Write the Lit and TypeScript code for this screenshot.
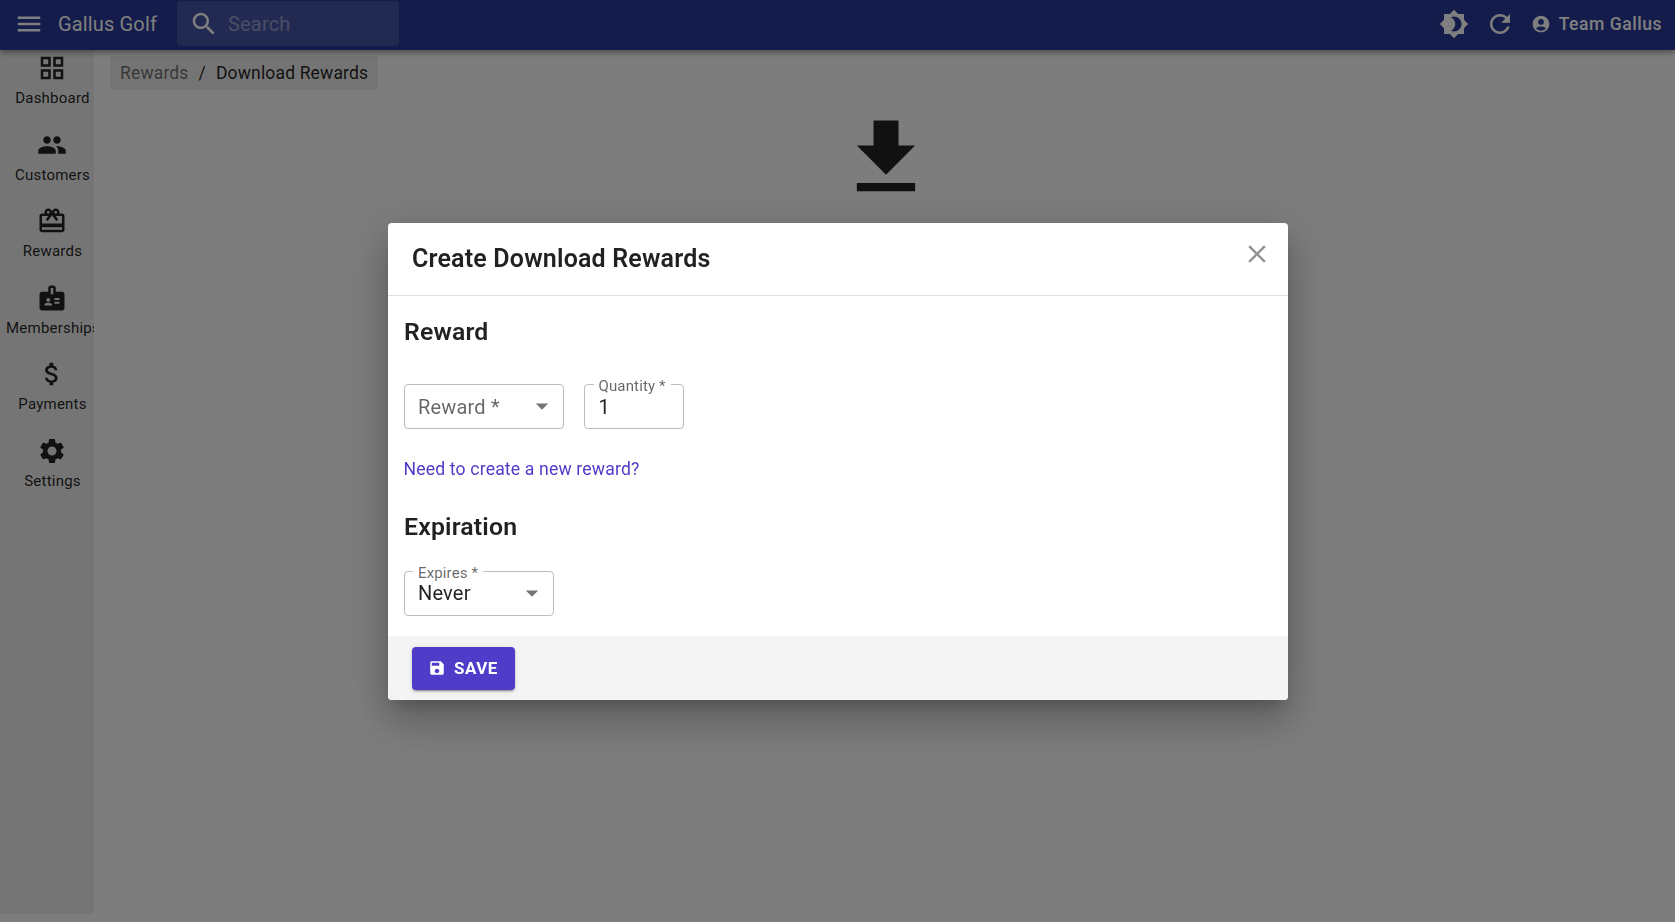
import { LitElement, html, css, svg } from "lit";
import { customElement } from "lit/decorators.js";

const P = {
  menu: "M3 18h18v-2H3v2zm0-5h18v-2H3v2zm0-7v2h18V6H3z",
  search: "M15.5 14h-.79l-.28-.27C15.41 12.59 16 11.11 16 9.5 16 5.91 13.09 3 9.5 3S3 5.91 3 9.5 5.91 16 9.5 16c1.61 0 3.09-.59 4.23-1.57l.27.28v.79l5 4.99L20.49 19l-4.99-5zm-6 0C7.01 14 5 11.99 5 9.5S7.01 5 9.5 5 14 7.01 14 9.5 11.99 14 9.5 14z",
  bright: "M20 8.69V4h-4.69L12 .69 8.69 4H4v4.69L.69 12 4 15.31V20h4.69L12 23.31 15.31 20H20v-4.69L23.31 12 20 8.69zM12 18c-.89 0-1.74-.2-2.5-.55C11.56 16.5 13 14.42 13 12s-1.44-4.5-3.5-5.45C10.26 6.2 11.11 6 12 6c3.31 0 6 2.69 6 6s-2.69 6-6 6z",
  refresh: "M17.65 6.35C16.2 4.9 14.21 4 12 4c-4.42 0-7.99 3.58-7.99 8s3.57 8 7.99 8c3.73 0 6.84-2.55 7.73-6h-2.08c-.82 2.33-3.04 4-5.65 4-3.31 0-6-2.69-6-6s2.69-6 6-6c1.66 0 3.14.69 4.22 1.78L13 11h7V4l-2.35 2.35z",
  account: "M12 2C6.48 2 2 6.48 2 12s4.48 10 10 10 10-4.48 10-10S17.52 2 12 2zm0 4c1.93 0 3.5 1.57 3.5 3.5S13.93 13 12 13s-3.5-1.57-3.5-3.5S10.07 6 12 6zm0 14c-2.03 0-4.43-.82-6.14-2.88C7.55 15.8 9.68 15 12 15s4.45.8 6.14 2.12C16.43 19.18 14.03 20 12 20z",
  grid: "M3 3v8h8V3H3zm6 6H5V5h4v4zm-6 4v8h8v-8H3zm6 6H5v-4h4v4zm4-16v8h8V3h-8zm6 6h-4V5h4v4zm-6 4v8h8v-8h-8zm6 6h-4v-4h4v4z",
  people: "M16 11c1.66 0 2.99-1.34 2.99-3S17.66 5 16 5c-1.66 0-3 1.34-3 3s1.34 3 3 3zm-8 0c1.66 0 2.99-1.34 2.99-3S9.66 5 8 5C6.34 5 5 6.34 5 8s1.34 3 3 3zm0 2c-2.33 0-7 1.17-7 3.5V19h14v-2.5c0-2.33-4.67-3.5-7-3.5zm8 0c-.29 0-.62.02-.97.05 1.16.84 1.97 1.97 1.97 3.45V19h6v-2.5c0-2.33-4.67-3.5-7-3.5z",
  gift: "M20 6h-2.18c.11-.31.18-.65.18-1 0-1.66-1.34-3-3-3-1.05 0-1.96.54-2.5 1.35l-.5.67-.5-.68C10.96 2.54 10.05 2 9 2 7.34 2 6 3.34 6 5c0 .35.07.69.18 1H4c-1.11 0-1.99.89-1.99 2L2 19c0 1.11.89 2 2 2h16c1.11 0 2-.89 2-2V8c0-1.11-.89-2-2-2zm-5-2c.55 0 1 .45 1 1s-.45 1-1 1-1-.45-1-1 .45-1 1-1zM9 4c.55 0 1 .45 1 1s-.45 1-1 1-1-.45-1-1 .45-1 1-1zm11 15H4v-2h16v2zm0-5H4V8h5.08L7 10.83 8.62 12 11 8.76l1-1.36 1 1.36L15.38 12 17 10.83 14.92 8H20v6z",
  badge: "M20 7h-5V4c0-1.1-.9-2-2-2h-2c-1.1 0-2 .9-2 2v3H4c-1.1 0-2 .9-2 2v11c0 1.1.9 2 2 2h16c1.1 0 2-.9 2-2V9c0-1.1-.9-2-2-2zM9 12c.83 0 1.5.67 1.5 1.5S9.83 15 9 15s-1.5-.67-1.5-1.5S8.17 12 9 12zm3 6H6v-.75c0-1 2-1.5 3-1.5s3 .5 3 1.5V18zm1-9h-2V4h2v5zm5 7.5h-4V15h4v1.5zm0-3h-4V12h4v1.5z",
  money: "M11.8 10.9c-2.27-.59-3-1.2-3-2.15 0-1.09 1.01-1.85 2.7-1.85 1.78 0 2.44.85 2.5 2.1h2.21c-.07-1.72-1.12-3.3-3.21-3.81V3h-3v2.16c-1.94.42-3.5 1.68-3.5 3.61 0 2.31 1.91 3.46 4.7 4.13 2.5.6 3 1.48 3 2.41 0 .69-.49 1.79-2.7 1.79-2.06 0-2.87-.92-2.98-2.1h-2.2c.12 2.19 1.76 3.42 3.68 3.83V21h3v-2.15c1.95-.37 3.5-1.5 3.5-3.55 0-2.84-2.43-3.81-4.7-4.4z",
  gear: "M19.14,12.94c0.04-0.3,0.06-0.61,0.06-0.94c0-0.32-0.02-0.64-0.07-0.94l2.03-1.58c0.18-0.14,0.23-0.41,0.12-0.61l-1.92-3.32c-0.12-0.22-0.37-0.29-0.59-0.22l-2.39,0.96c-0.5-0.38-1.03-0.7-1.62-0.94L14.4,2.81c-0.04-0.24-0.24-0.41-0.48-0.41h-3.84c-0.24,0-0.43,0.17-0.47,0.41L9.25,5.35C8.66,5.59,8.12,5.92,7.63,6.29L5.24,5.33c-0.22-0.08-0.47,0-0.59,0.22L2.74,8.87C2.62,9.08,2.66,9.34,2.86,9.48l2.03,1.58C4.84,11.36,4.8,11.69,4.8,12s0.02,0.64,0.07,0.94l-2.03,1.58c-0.18,0.14-0.23,0.41-0.12,0.61l1.92,3.32c0.12,0.22,0.37,0.29,0.59,0.22l2.39-0.96c0.5,0.38,1.03,0.7,1.62,0.94l0.36,2.54c0.05,0.24,0.24,0.41,0.48,0.41h3.84c0.24,0,0.44-0.17,0.47-0.41l0.36-2.54c0.59-0.24,1.13-0.56,1.62-0.94l2.39,0.96c0.22,0.08,0.47,0,0.59-0.22l1.92-3.32c0.12-0.22,0.07-0.47-0.12-0.61L19.14,12.94z M12,15.6c-1.98,0-3.6-1.62-3.6-3.6s1.62-3.6,3.6-3.6s3.6,1.62,3.6,3.6S13.98,15.6,12,15.6z",
  download: "M19 9h-4V3H9v6H5l7 7 7-7zM5 18v2h14v-2H5z",
  close: "M19 6.41 17.59 5 12 10.59 6.41 5 5 6.41 10.59 12 5 17.59 6.41 19 12 13.41 17.59 19 19 17.59 13.41 12z",
  arrow: "M7 10l5 5 5-5z",
  save: "M17 3H5c-1.11 0-2 .9-2 2v14c0 1.1.89 2 2 2h14c1.1 0 2-.9 2-2V7l-4-4zm-5 16c-1.66 0-3-1.34-3-3s1.34-3 3-3 3 1.34 3 3-1.34 3-3 3zm3-10H5V5h10v4z",
};

const icon = (d: string, size = 30) =>
  html`<svg class="ic" width=${size} height=${size} viewBox="0 0 24 24" fill="currentColor">${svg`<path d=${d}></path>`}</svg>`;

const NAV: [string, string][] = [
  ["Dashboard", P.grid],
  ["Customers", P.people],
  ["Rewards", P.gift],
  ["Memberships", P.badge],
  ["Payments", P.money],
  ["Settings", P.gear],
];

@customElement("app-root")
export class AppRoot extends LitElement {
  static styles = css`
    :host {
      display: block;
      height: 922px;
      overflow: hidden;
      background: #fafafa;
      font-family: Roboto, "Liberation Sans", sans-serif;
      color: rgba(0, 0, 0, 0.87);
    }
    .ic { display: block; flex: none; }
    .bar {
      position: relative;
      z-index: 1;
      height: 50px;
      box-sizing: border-box;
      background: #273894;
      color: #fff;
      display: flex;
      align-items: center;
      padding: 0 13px 3px 14px;
      box-shadow: 0 2px 4px -1px rgba(0,0,0,.2), 0 4px 5px 0 rgba(0,0,0,.14), 0 1px 10px 0 rgba(0,0,0,.12);
    }
    .brand { margin-left: 14px; font-size: 20px; letter-spacing: 0.0075em; width: 119px; }
    .search {
      width: 222px;
      height: 45px;
      border-radius: 4px;
      background: rgba(255,255,255,.15);
      display: flex;
      align-items: center;
      padding-left: 12px;
      box-sizing: border-box;
      gap: 9px;
      font-size: 20px;
      letter-spacing: 0.00938em;
    }
    .search span { color: rgba(255,255,255,.42); }
    .spacer { flex: 1; }
    .bar .action { margin-left: 16px; }
    .user { display: flex; align-items: center; gap: 8px; margin-left: 16px; font-size: 17.6px; font-weight: 500; letter-spacing: 0.02857em; }
    .main { display: flex; height: 864px; }
    .side { width: 94px; flex: none; background: #ebebeb; overflow: hidden; padding-top: 3px; box-sizing: border-box; }
    .nav { width: 93px; margin-left: 6px; height: 76.6px; display: flex; flex-direction: column; text-align: center; font-size: 15px; letter-spacing: 0.015em; white-space: nowrap; color: rgba(0,0,0,.87); }
    .nav .ic { margin-left: 31px; color: #222; }
    .nav span { margin-top: 5px; line-height: 20px; }
    .content { flex: 1; padding: 6px 13px 0 16px; display: flex; flex-direction: column; }
    .crumbs { align-self: flex-start; background: #e8e8e8; border-radius: 4px; height: 34px; display: flex; align-items: center; padding: 0 10px; gap: 10px; font-size: 17.5px; letter-spacing: 0.00938em; }
    .crumbs .dim { color: rgba(0,0,0,.54); }
    .big { align-self: center; margin-top: 18px; color: #222; }

    .overlay { position: fixed; inset: 0; z-index: 5; background: rgba(0,0,0,.5); display: flex; align-items: center; justify-content: center; }
    .dialog { width: 900px; height: 477px; background: #fff; border-radius: 4px; overflow: hidden; display: flex; flex-direction: column;
      box-shadow: 0 11px 15px -7px rgba(0,0,0,.2), 0 24px 38px 3px rgba(0,0,0,.14), 0 9px 46px 8px rgba(0,0,0,.12); }
    .dlg-head { height: 73px; flex: none; box-sizing: border-box; border-bottom: 1px solid #e0e0e0; display: flex; align-items: flex-start; justify-content: space-between; padding: 0 16px 0 24.5px; }
    .dlg-head h2 { margin: 1px 0 0; font-size: 25px; font-weight: 600; line-height: 70px; letter-spacing: 0.0075em; color: rgba(0,0,0,.87); }
    .close { margin-top: 16px; color: rgba(0,0,0,.42); }
    .dlg-body { flex: 1; padding: 0 16.5px; display: flex; flex-direction: column; }
    h3 { margin: 0; font-size: 24.8px; font-weight: 600; line-height: 36px; letter-spacing: 0.0075em; color: rgba(0,0,0,.87); }
    .sec1 { margin-top: 18px; }
    .sec2 { margin-top: 28px; }
    .row { display: flex; gap: 20px; margin-top: 34px; margin-left: -0.5px; }
    .row2 { margin-top: 26px; }
    .field { position: relative; height: 45px; box-sizing: border-box; border: 1px solid #bdbdbd; border-radius: 4px; display: flex; align-items: center; justify-content: space-between; padding: 0 6px 0 14px; font-size: 20px; letter-spacing: 0.00938em; }
    .field .ph { color: rgba(0,0,0,.6); position: relative; top: 1px; left: -0.5px; }
    .field .ic { color: rgba(0,0,0,.54); }
    .field .lbl { position: absolute; left: 9px; top: -8px; padding: 0 5px; background: #fff; font-size: 15px; line-height: 18px; letter-spacing: 0.00938em; color: rgba(0,0,0,.6); }
    .field .val { position: relative; top: 1px; }
    .tight .lbl { left: 8.5px; }
    .tight .val { left: -0.5px; top: 0; }
    .link { margin-top: 28px; margin-left: -0.5px; font-size: 17.6px; letter-spacing: 0.00938em; line-height: 24px; color: #4f3cc9; }
    .dlg-foot { height: 64px; flex: none; background: #f4f4f4; padding: 11px 24px 0; box-sizing: border-box; }
    .save { width: 103px; height: 43px; border-radius: 4px; background: #4f3cc9; color: #fff; display: flex; align-items: center; padding-left: 16px; box-sizing: border-box; gap: 8.5px; font-size: 17px; font-weight: 700; letter-spacing: 0.02857em;
      box-shadow: 0 3px 1px -2px rgba(0,0,0,.2), 0 2px 2px 0 rgba(0,0,0,.14), 0 1px 5px 0 rgba(0,0,0,.12); }
  `;

  render() {
    return html`
      <header class="bar">
        ${icon(P.menu)}
        <div class="brand">Gallus Golf</div>
        <div class="search">${icon(P.search)}<span>Search</span></div>
        <div class="spacer"></div>
        ${icon(P.bright)}
        <div class="action">${icon(P.refresh)}</div>
        <div class="user">${icon(P.account, 20)}<span>Team Gallus</span></div>
      </header>
      <div class="main">
        <nav class="side">
          ${NAV.map(([t, d]) => html`<div class="nav">${icon(d)}<span>${t}</span></div>`)}
        </nav>
        <main class="content">
          <div class="crumbs"><span class="dim">Rewards</span><span>/</span><span>Download Rewards</span></div>
          <div class="big">${icon(P.download, 100)}</div>
        </main>
      </div>
      <div class="overlay">
        <section class="dialog">
          <div class="dlg-head">
            <h2>Create Download Rewards</h2>
            <div class="close">${icon(P.close)}</div>
          </div>
          <div class="dlg-body">
            <h3 class="sec1">Reward</h3>
            <div class="row">
              <div class="field" style="width:160px"><span class="ph">Reward *</span>${icon(P.arrow)}</div>
              <div class="field" style="width:100px"><span class="lbl">Quantity *</span><span class="val">1</span></div>
            </div>
            <div class="link">Need to create a new reward?</div>
            <h3 class="sec2">Expiration</h3>
            <div class="row row2">
              <div class="field tight" style="width:150px"><span class="lbl">Expires *</span><span class="val">Never</span>${icon(P.arrow)}</div>
            </div>
          </div>
          <div class="dlg-foot">
            <div class="save">${icon(P.save, 18)}<span>SAVE</span></div>
          </div>
        </section>
      </div>
    `;
  }
}
